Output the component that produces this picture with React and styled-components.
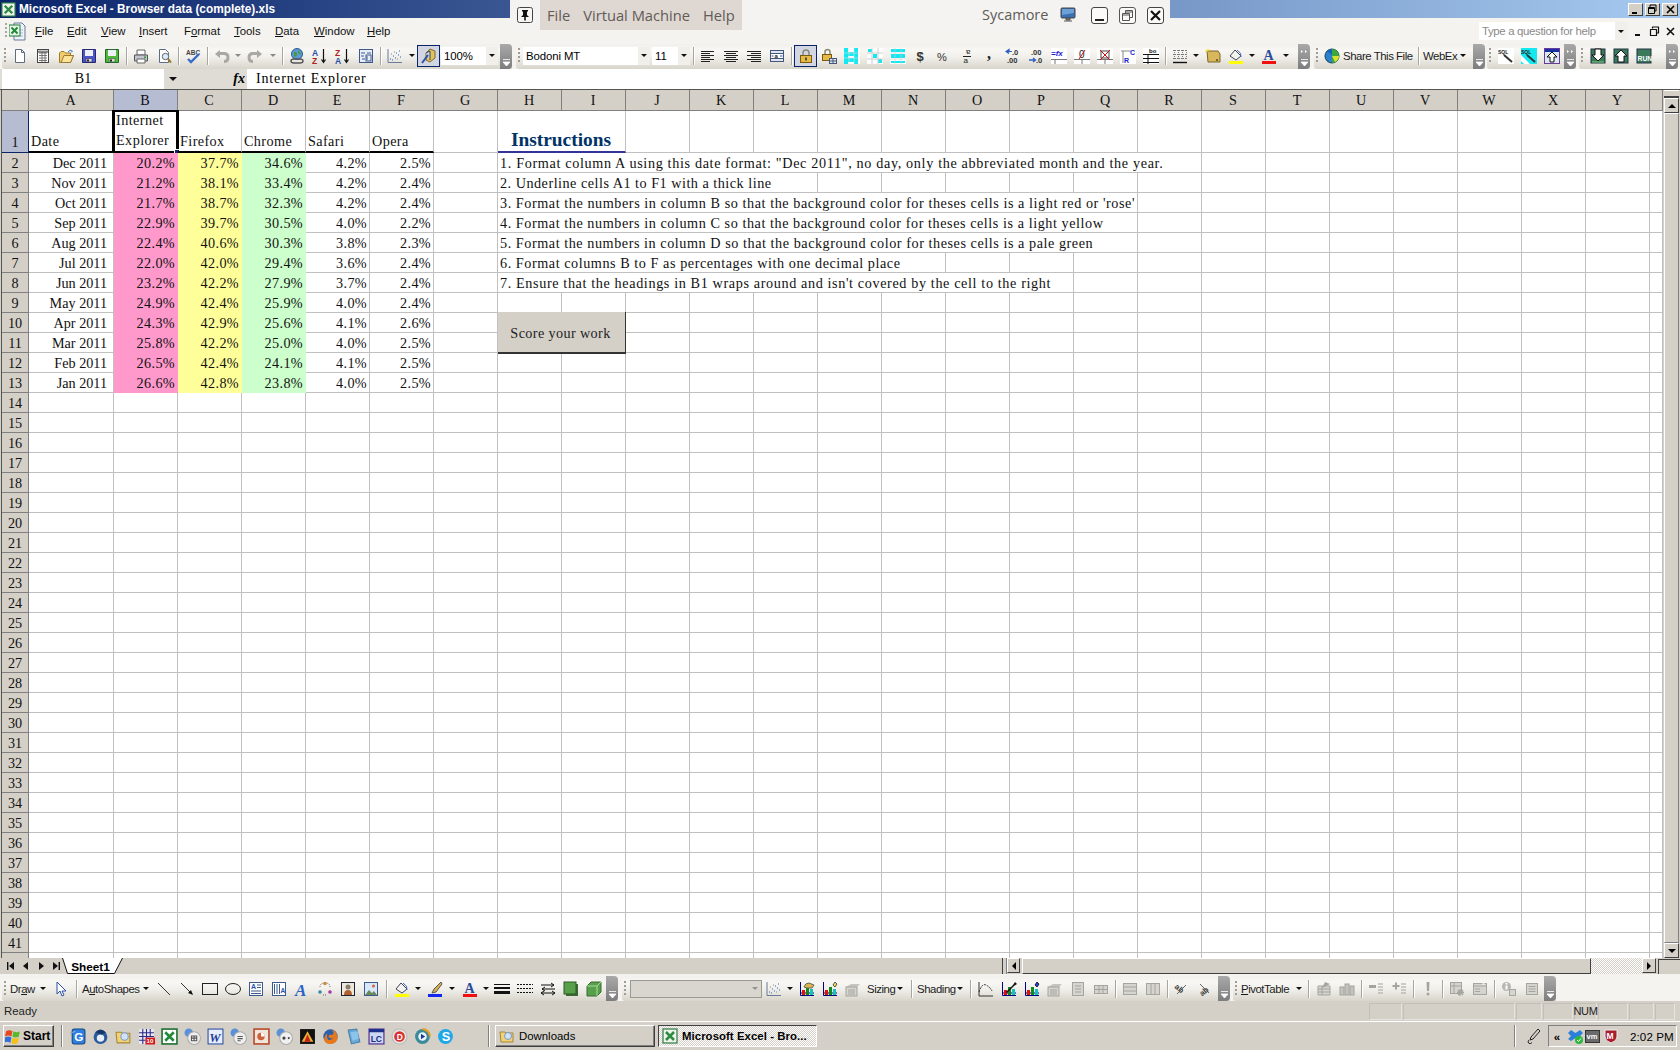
import React from 'react';
import styled, { createGlobalStyle, css } from 'styled-components';

const UI = '"Liberation Sans", Arial, sans-serif';
const SERIF = '"Liberation Serif", "Times New Roman", serif';

const Global = createGlobalStyle`
  html, body { margin: 0; padding: 0; overflow: hidden; background: #d4d0c8; }
  * { box-sizing: border-box; }
`;

const Page = styled.div`
  width: 1680px; height: 1050px; position: relative; overflow: hidden;
  display: flex; flex-direction: column; background: #d4d0c8;
  font-family: ${UI}; font-size: 11px; color: #000;
`;

/* ---------- title ---------- */
const TitleBar = styled.div`
  height: 18px; flex: none; display: flex; align-items: center; padding: 0 2px 0 1px;
  background: linear-gradient(90deg, #0a246a 0%, #a6caf0 100%);
`;
const TitleText = styled.span`
  margin-left: 3px; color: #fff; font-weight: 700; font-size: 11.85px; white-space: nowrap; flex: 1;
`;
const WinButtons = styled.div`display: flex; gap: 2px;`;
const WinBtn = styled.div`
  width: ${p => p.$w || 15}px; height: 13px; background: #d4d0c8; display: flex; align-items: center; justify-content: center;
  border: 1px solid; border-color: #fff #404040 #404040 #fff;
`;

/* ---------- vm overlay ---------- */
const VmBar = styled.div`
  position: absolute; left: 510px; top: 0; width: 660px; height: 30px; background: #f4f3f1;
  display: flex; align-items: flex-start; font-family: "Open Sans", "Noto Sans", sans-serif; color: #5f5b57;
`;
const VmPinSlot = styled.div`width: 30px; height: 30px; display: flex; align-items: center; justify-content: center;`;
const VmMenu = styled.div`
  width: 202px; height: 30px; background: #dfd8d2; display: flex; align-items: center; font-size: 14.7px; padding-left: 7px; gap: 13px;
`;
const VmName = styled.div`margin-left: 240px; height: 30px; line-height: 30px; font-size: 14.5px; width: 70px; white-space: nowrap;`;
const VmIcons = styled.div`display: flex; align-items: center; height: 30px;`;
const VmIconSlot = styled.div`width: ${p => p.$w}px; display: flex; justify-content: center; align-items: center;`;

/* ---------- menu ---------- */
const MenuBar = styled.div`
  height: 26px; flex: none; background: #f4f3f0; display: flex; align-items: center; padding-left: 5px; position: relative;
`;
const MenuGrip = styled.div`
  width: 3px; height: 16px; margin-right: 1px;
  background: linear-gradient(#a8a8a0 50%, transparent 50%) 0 0 / 2px 4px repeat-y;
`;
const MenuDoc = styled.div`width: 26px; height: 20px; display: flex; align-items: center; justify-content: flex-start;`;
const MenuItem = styled.span`
  width: ${p => p.$w}px; font-size: 11.4px; white-space: nowrap; color: #111;
`;
const Key = styled.u`text-decoration: underline;`;
const HelpBox = styled.div`
  position: absolute; left: 1479px; top: 4px; width: 148px; height: 18px; background: #fff; display: flex; align-items: center;
  padding-left: 3px; font-size: 11.4px; letter-spacing: -.33px; color: #8a8a8a; white-space: nowrap;
`;
const HelpArrow = styled.div`
  position: absolute; right: 0; top: 0; width: 12px; height: 18px; background: #f1efea; display: flex; align-items: center; justify-content: center;
`;
const DocButtons = styled.div`position: absolute; left: 1630px; top: 5px; width: 50px; height: 16px; display: flex; align-items: center;`;
const DocBtn = styled.div`width: 16px; display: flex; justify-content: center;`;

/* ---------- toolbars ---------- */
const ToolRow = styled.div`
  height: ${p => p.$h}px; flex: none; display: flex; align-items: stretch; padding-left: 2px;
  background: ${p => p.$bg || '#f4f3f0'};
  ${p => p.$top && css`padding-top: 1px;`}
`;
const Band = styled.div`
  width: ${p => p.$w}px; margin-left: ${p => p.$ml || 0}px; flex: none; display: flex; align-items: center;
  padding-bottom: ${p => p.$pb || 0}px;
  border-radius: 3px 0 0 3px;
  background: linear-gradient(#f1f0ec 0%, #f8f7f4 25%, #efeee9 55%, #d8d5cb 100%);
`;
const Grip = styled.div`
  width: ${p => p.$w || 6}px; flex: none; height: 100%; display: flex; align-items: center; padding-left: 2px;
  &::before {
    content: ''; width: 2px; height: 15px;
    background: linear-gradient(#9d9c96 50%, transparent 50%) 0 0 / 2px 4px repeat-y;
  }
`;
const Tool = styled.div`
  width: 23px; height: 22px; flex: none; display: flex; align-items: center; justify-content: center;
  ${p => p.$on && css`background: #d2d5e2; outline: 1px solid #0a246a; outline-offset: -1px;`}
`;
const Sep = styled.div`
  width: ${p => p.$w || 6}px; flex: none; height: 18px; display: flex; justify-content: center;
  &::before { content: ''; width: 1px; height: 100%; background: #a8a69e; box-shadow: 1px 0 0 #fff; }
`;
const Drop = styled.div`
  width: ${p => p.$w || 10}px; flex: none; display: flex; justify-content: center; align-items: center;
  &::before {
    content: ''; border-left: 3px solid transparent; border-right: 3px solid transparent;
    border-top: 3px solid ${p => p.$c || '#111'};
  }
`;
const TLabel = styled.div`
  width: ${p => p.$w}px; flex: none; font-size: 11.4px; letter-spacing: -.45px; white-space: nowrap; padding-left: ${p => p.$pl || 0}px; color: #1c1c1c;
`;
const Combo = styled.div`
  width: ${p => p.$w}px; margin-left: ${p => p.$ml || 0}px; height: 18px; flex: none; background: ${p => p.$off ? '#d8d6ce' : '#fff'};
  display: flex; align-items: center; padding-left: 3px; font-size: 11.4px; letter-spacing: -.1px; position: relative; white-space: nowrap;
  ${p => p.$off && css`border: 1px solid #9a9a94;`}
`;
const ComboBtn = styled.div`
  position: absolute; right: 0; top: 0; bottom: 0; width: 12px; display: flex; align-items: center; justify-content: center;
  background: ${p => p.$off ? 'transparent' : '#f0efea'};
  &::before {
    content: ''; border-left: 3px solid transparent; border-right: 3px solid transparent;
    border-top: 3px solid ${p => p.$off ? '#909090' : '#111'};
  }
`;
const Handle = styled.div`
  width: ${p => p.$w || 12}px; margin-left: auto; margin-bottom: ${p => -(p.$mb || 0)}px; flex: none; align-self: stretch; border-radius: 0 4px 4px 0;
  background: linear-gradient(#a9a9a9, #7d7d7d); display: flex; flex-direction: column; align-items: center; justify-content: space-between; padding: 5px 0 3px;
`;

/* ---------- formula ---------- */
const FormulaBar = styled.div`
  height: 20px; flex: none; display: flex; background: #dedcd5; padding-left: 2px; align-items: stretch;
  font-family: ${SERIF}; font-size: 14px;
`;
const NameBox = styled.div`width: 162px; background: #fff; text-align: center; line-height: 19px;`;
const NameArrow = styled.div`
  width: 18px; display: flex; align-items: center; justify-content: center;
  &::before { content: ''; border-left: 4px solid transparent; border-right: 4px solid transparent; border-top: 4px solid #111; }
`;
const FxBox = styled.div`width: 65px; display: flex; align-items: center; justify-content: flex-end; padding-right: 2px; font-style: italic; font-weight: 700; font-size: 14px;`;
const FormulaInput = styled.div`flex: 1; background: #fff; padding-left: 9px; line-height: 19px; letter-spacing: .85px; margin-left: 0;`;

/* ---------- sheet ---------- */
const Sheet = styled.div`
  height: 869px; flex: none; display: flex; border-top: 1px solid #55554f; overflow: hidden;
`;
const GridArea = styled.div`
  flex: 1; position: relative; overflow: hidden; margin-left: 1px; border-left: 1px solid #55554f; background: #fff;
  font-family: ${SERIF}; font-size: 14.2px; color: #111;
`;
const Row = styled.div`display: flex; height: ${p => p.$h}px;`;
const RowHead = styled.div`
  width: 27px; flex: none; text-align: center; background: ${p => p.$on ? '#b6bdd2' : '#d4d0c8'};
  border-right: 1px solid ${p => p.$on ? '#0a246a' : '#808080'};
  border-bottom: 1px solid ${p => p.$on ? '#0a246a' : '#808080'};
  display: flex; align-items: flex-end; justify-content: center; line-height: ${p => p.$on ? 19 : 17}px;
`;
const ColHead = styled.div`
  width: ${p => p.$w}px; flex: ${p => p.$w ? 'none' : '1'}; background: ${p => p.$on ? '#b6bdd2' : '#d4d0c8'};
  border-right: 1px solid #808080; border-bottom: 1px solid #808080; text-align: center; line-height: 20px; padding-right: 1px;
`;
const Cell = styled.div`
  width: ${p => p.$w}px; flex: ${p => p.$w ? 'none' : '1'}; position: relative; white-space: nowrap;
  display: flex; align-items: flex-end; justify-content: ${p => p.$right ? 'flex-end' : p.$center ? 'center' : 'flex-start'};
  padding: 0 ${p => p.$pr ?? 3}px 0 2px; line-height: ${p => p.$thick ? 19 : 17}px;
  background: ${p => p.$fill || 'transparent'};
  border-right: 1px solid ${p => p.$fill || '#c0c0c0'};
  border-bottom: ${p => p.$thick ? `2px solid ${p.$thick}` : `1px solid ${p.$fill || '#c0c0c0'}`};
`;
const WrapText = styled.div`white-space: normal; line-height: 20px; letter-spacing: .45px; position: relative; top: -1px;`;
const Heading = styled.span`
  font-weight: 700; font-size: 19.4px; color: #003366; line-height: 22px;
`;
const Note = styled.span`letter-spacing: ${p => p.$ls}px;`;
const Selection = styled.div`
  position: absolute; left: -2px; top: -1px; right: -2px; bottom: -2px;
  border: 2px solid #000; border-left-width: 3px; border-right-width: 3px; pointer-events: none;
`;
const FillHandle = styled.div`
  position: absolute; right: -4px; bottom: -3px; width: 6px; height: 5px; background: #0a246a; border: 1px solid #fff;
`;
const ScoreButton = styled.div`
  position: absolute; left: 496px; top: 222px; width: 128px; height: 42px; background: #d4d0c8; padding: 2px 2px 0 0;
  border-bottom: 2px solid #333; border-right: 1px solid #333;
  display: flex; align-items: center; justify-content: center; letter-spacing: .38px; color: #222;
`;
const VScroll = styled.div`width: 17px; flex: none; background: #d4d0c8; display: flex; flex-direction: column; padding: 0 1px;`;
const Split = styled.div`height: 8px; border-top: 1px solid #fff; border-bottom: 2px solid #404040; flex: none;`;
const SBtn = styled.div`
  width: ${p => p.$w || 15}px; height: ${p => p.$h || 15}px; flex: none; background: #d4d0c8; display: flex; align-items: center; justify-content: center;
  border: 1px solid; border-color: #fff #404040 #404040 #fff;
`;
const Thumb = styled.div`flex: 1; border: 1px solid; border-color: #fff #808080 #808080 #fff;`;

/* ---------- tabs ---------- */
const TabRow = styled.div`
  height: 17px; flex: none; display: flex; background: #d4d0c8; align-items: stretch; border-bottom: 1px solid #f4f3f0; padding-left: 3px;
`;
const NavBtn = styled.div`width: 15px; display: flex; align-items: center; justify-content: center;`;
const Tab = styled.div`
  width: 62px; margin-left: -1px; position: relative; display: flex; align-items: center; justify-content: center;
  font-weight: 700; font-size: 11.8px; padding: 1px 5px 0 0;
`;
const TabShape = styled.svg`position: absolute; left: 0; top: 0;`;
const TabText = styled.span`position: relative;`;
const TabFill = styled.div`flex: 1;`;
const HSplit = styled.div`width: 5px; flex: none; border-left: 1px solid #404040; border-right: 1px solid #808080;`;
const HThumb = styled.div`width: 569px; flex: none; margin-left: 2px; border: 1px solid; border-color: #fff #404040 #404040 #fff;`;
const Checker = styled.div`
  width: 51px; flex: none;
  background: repeating-conic-gradient(#fff 0 25%, #d4d0c8 0 50%) 0 0 / 2px 2px;
`;
const Corner = styled.div`width: 22px; flex: none; margin-left: 2px; border-left: 1px solid #404040; border-top: 1px solid #404040; margin-top: 1px;`;

/* ---------- status ---------- */
const Status = styled.div`
  height: 21px; flex: none; display: flex; align-items: center; background: #d4d0c8; padding-left: 4px; font-size: 11.4px; border-bottom: 1px solid #fff; color: #222;
`;
const StatusText = styled.span`width: 1365px;`;
const Panel = styled.div`
  width: ${p => p.$w}px; height: 17px; flex: none; margin-right: 1px; border: 1px solid; border-color: #c4c0b8 #e6e4de #e6e4de #c4c0b8;
  display: flex; align-items: center; justify-content: center; font-size: 11px; letter-spacing: -.4px;
`;

/* ---------- taskbar ---------- */
const Taskbar = styled.div`
  height: 28px; flex: none; display: flex; align-items: center; background: #d4d0c8; padding-left: 3px;
`;
const StartBtn = styled.div`
  width: 51px; height: 22px; flex: none; display: flex; align-items: center; padding-left: 1px; gap: 1px; font-weight: 700; font-size: 12px;
  border: 1px solid; border-color: #fff #404040 #404040 #fff; box-shadow: inset -1px -1px 0 #808080;
`;
const TaskSep = styled.div`
  width: 2px; height: 22px; flex: none; margin-left: ${p => p.$ml}px; margin-right: ${p => p.$mr}px;
  border-left: 1px solid #808080; border-right: 1px solid #fff;
`;
const Quick = styled.div`width: 23px; flex: none; display: flex; justify-content: center; align-items: center;`;
const TaskBtn = styled.div`
  width: ${p => p.$w}px; height: 22px; flex: none; margin-left: ${p => p.$ml || 0}px; display: flex; align-items: center; gap: 4px; padding-left: 3px; white-space: nowrap;
  font-size: 11.4px;
  border: 1px solid;
  ${p => p.$on ? css`
    border-color: #404040 #fff #fff #404040; font-weight: 700; letter-spacing: .05px;
    background: repeating-conic-gradient(#fff 0 25%, #d4d0c8 0 50%) 0 0 / 2px 2px;
  ` : css`
    border-color: #fff #404040 #404040 #fff; box-shadow: inset -1px -1px 0 #808080;
  `}
`;
const TaskFill = styled.div`flex: 1;`;
const Tray = styled.div`
  width: 129px; height: 22px; flex: none; margin-left: 3px; margin-right: 3px; display: flex; align-items: center;
  border: 1px solid; border-color: #808080 #fff #fff #808080; font-size: 11.6px;
`;
const TrayIcon = styled.div`width: ${p => p.$w}px; flex: none; display: flex; justify-content: center; align-items: center; font-weight: 700;`;
const Clock = styled.span`margin-left: 8px; white-space: nowrap; letter-spacing: .1px;`;

/* ---------- icons ---------- */
const Doc = ({ fill = '#fff', st = '#5d6b84' }) => <path d="M3.500 1.500h6l3 3v10h-9z" fill={fill} stroke={st} />;
const G = '#a9a8a2';
const Floppy = (a, b) => <>
  <path d="M1.500 1.500h13v13h-13z" fill={a} stroke={b} />
  <path d="M4 2h8v6H4z" fill="#eef0f8" />
  <path d="M5 10.500h6V14H5z" fill="#d8d8d8" stroke={b} strokeWidth=".6" />
  <rect x="6" y="11.500" width="2" height="2" fill="#222" />
</>;
const Bars = (rows) => rows.map((r, i) => <path key={i} d={`M${r[0]} ${r[1]}h${r[2]}`} stroke={r[3] || '#222'} />);
const BarChart = (x) => <>
  <path d="M1.500 1v13.500H15" fill="none" stroke="#000080" />
  <path d="M1 12h14" stroke="#000080" />
  <rect x="3" y="9" width="3" height="5" fill="#e01010" /><rect x="7" y="6" width="3" height="8" fill="#108a20" /><rect x="11" y="8" width="3" height="6" fill="#18c0c0" />
  {x}
</>;
const Gray = <>
  <path d="M1 6l5-3h9l-3 3H1z" fill="#c6c5bf" /><rect x="1" y="6" width="11" height="9" fill="#d5d4ce" stroke="#a5a49e" />
  <path d="M3 9h7M3 11h7M3 13h7" stroke="#a5a49e" />
</>;
const I = {
  new: <><Doc /><path d="M9.500 1.500v3h3" fill="none" stroke="#5d6b84" /></>,
  tmpl: <><rect x="2.500" y="1.500" width="11" height="13" fill="#fff" stroke="#444" /><path d="M4 5h8M4 7.500h8M4 10h8M4 12.500h8M7 4v10M10 4v10" stroke="#777" /><path d="M2.500 1.500h11V4h-11z" fill="#ccc" stroke="#444" /></>,
  open: <><path d="M1.500 5v9.500h11l3-7h-3V5h-5L6 3.500H3z" fill="#f2cb6c" stroke="#9a7a2d" /><path d="M3 14.500l3-7h9.500l-3 7z" fill="#fbe49a" stroke="#9a7a2d" /><path d="M10 4q2-3 4.500-1L13 4.500" fill="none" stroke="#3a7bd0" /></>,
  save: Floppy('#4b55c8', '#23286f'),
  save2: Floppy('#53b83a', '#23672a'),
  print: <><path d="M4 2h8v5H4z" fill="#fff" stroke="#666" /><path d="M1.500 7h13v6h-13z" fill="#c2c6d0" stroke="#555" /><path d="M4 11h8v4H4z" fill="#fff" stroke="#666" /><rect x="11" y="8.500" width="2" height="1.500" fill="#2e9a35" /></>,
  prev: <><Doc /><circle cx="9.500" cy="8.500" r="3.200" fill="#d8ecff" stroke="#666" /><path d="M12 11l3 3.500" stroke="#9a7a2d" strokeWidth="2" /></>,
  spell: <><text x="1" y="6.500" fontSize="6.500" fontFamily="Liberation Sans" fontWeight="700" fill="#444">ABC</text><path d="M3 11l3 3 8-8" fill="none" stroke="#3b6bc8" strokeWidth="2.400" /></>,
  undo: <><path d="M5 5.500h5q4 0 4 4t-4 4" fill="none" stroke={G} strokeWidth="3" /><path d="M1 6l5-4v8z" fill={G} /></>,
  redo: <><path d="M11 5.500H6q-4 0-4 4t4 4" fill="none" stroke={G} strokeWidth="3" /><path d="M15 6l-5-4v8z" fill={G} /></>,
  link: <><circle cx="8" cy="6" r="5.500" fill="#5a9bd8" stroke="#2a5a90" /><path d="M5 3.500q3 0 3 3t-3 2zM9 2q3 2 3 5L9 5z" fill="#4a9a3c" /><path d="M2 13q0-2 3-2h6q3 0 3 2t-3 2H5q-3 0-3-2z" fill="none" stroke="#555" strokeWidth="1.400" /></>,
  az: <><text x="0" y="7.500" fontSize="8.500" fontFamily="Liberation Sans" fontWeight="700" fill="#2a50a8">A</text><text x="0" y="15.500" fontSize="8.500" fontFamily="Liberation Sans" fontWeight="700" fill="#b02020">Z</text><path d="M11.500 1v13M9.500 11.500l2 3 2-3" fill="none" stroke="#111" strokeWidth="1.200" /></>,
  za: <><text x="0" y="7.500" fontSize="8.500" fontFamily="Liberation Sans" fontWeight="700" fill="#b02020">Z</text><text x="0" y="15.500" fontSize="8.500" fontFamily="Liberation Sans" fontWeight="700" fill="#2a50a8">A</text><path d="M11.500 1v13M9.500 11.500l2 3 2-3" fill="none" stroke="#111" strokeWidth="1.200" /></>,
  form: <><rect x="1.500" y="1.500" width="13" height="13" fill="#e8eef8" stroke="#3c5a8c" /><path d="M3 5h4M9 5h4M3 8h3M9 8v4M7 11h-3" stroke="#3c5a8c" /><rect x="8" y="7" width="5" height="6" fill="none" stroke="#3c5a8c" /></>,
  scatter: <><path d="M1 1v13.500h14" fill="none" stroke="#6a7a9a" /><path d="M3 11h1M6 8h1M9 5h1M12 3h1M5 12h1M8 10h1M11 7h1M13 9h1" stroke="#3060c0" /><path d="M4 6h1M7 4h1M10 11h1" stroke="#888" /></>,
  wand: <><path d="M9 1l5 2v7l-5 4-4-2V5z" fill="#e3c25e" stroke="#7a6a30" /><path d="M5 5l4-2v9" fill="#c8d8f0" stroke="#345" /><path d="M1 15l6-8" stroke="#2f53a8" strokeWidth="2" /></>,
  alL: Bars([[1, 3.500, 13], [1, 5.500, 9], [1, 7.500, 13], [1, 9.500, 9], [1, 11.500, 13], [1, 13.500, 9]]),
  alC: Bars([[1, 3.500, 14], [3, 5.500, 10], [1, 7.500, 14], [3, 9.500, 10], [1, 11.500, 14], [3, 13.500, 10]]),
  alR: Bars([[1, 3.500, 14], [5, 5.500, 10], [1, 7.500, 14], [5, 9.500, 10], [1, 11.500, 14], [5, 13.500, 10]]),
  merge: <><rect x="1.500" y="2.500" width="13" height="11" fill="#dfe6f2" stroke="#44567a" /><path d="M1.500 5.500h13M1.500 10.500h13" stroke="#44567a" /><rect x="2" y="6" width="12" height="4" fill="#fff" /><text x="5.500" y="10" fontSize="6" fontFamily="Liberation Sans" fontWeight="700" fill="#222">a</text><path d="M2.500 8h2M11 8h2.500" stroke="#2a50a8" /></>,
  lock: <><path d="M5 8V5q0-3 3-3t3 3v3" fill="none" stroke="#8a8a7a" strokeWidth="1.500" /><rect x="2.500" y="7.500" width="11" height="7" fill="#e9b945" stroke="#7a5a10" /><rect x="7" y="9.500" width="2" height="3" fill="#553" /></>,
  lock2: <><path d="M4 7V4q0-2.500 2.500-2.500T9 4v3" fill="none" stroke="#8a8a7a" strokeWidth="1.500" /><rect x="1.500" y="6.500" width="9" height="6" fill="#e9b945" stroke="#7a5a10" /><rect x="8.500" y="10.500" width="7" height="5" fill="#dfe6f2" stroke="#44567a" /><path d="M8.500 13h7M12 10.500v5" stroke="#44567a" /></>,
  cy1: <><rect width="16" height="16" fill="#fff" /><path d="M0 0h4v16H0zM10 0h4v16h-4zM4 4h6v4H4zM4 10h6v4H4z" fill="#14e8f0" /><path d="M0 5h16M0 10h16M5 0v16M10 0v16" stroke="#ddd" strokeWidth=".6" /></>,
  cy2: <><rect width="16" height="16" fill="#fff" /><path d="M1 1h4v3H1zM6 6h4v4H6zM11 11h4v4h-4z" fill="#14e8f0" /><path d="M0 5h16M0 11h16M5 0v16M11 0v16" stroke="#ccc" /></>,
  cy3: <><rect width="16" height="16" fill="#fff" /><path d="M1 1h14v3H1zM1 6h14v4H1zM1 13h14v2H1z" fill="#14e8f0" /><path d="M0 5h16M0 11h16M5 0v16M11 0v16" stroke="#ccc" strokeWidth=".6" /></>,
  dollar: <text x="3.500" y="13" fontSize="13" fontFamily="Liberation Sans" fontWeight="700" fill="#333">$</text>,
  pct: <text x="1" y="12.500" fontSize="11" fontFamily="Liberation Sans" fill="#333">%</text>,
  aa: <><text x="4.500" y="7" fontSize="8" fontFamily="Liberation Sans" fill="#222" transform="rotate(180 8 4.500)">a</text><path d="M4 8.500h8" stroke="#222" /><text x="4.500" y="15" fontSize="8" fontFamily="Liberation Sans" fill="#222">a</text></>,
  comma: <text x="5" y="11" fontSize="16" fontFamily="Liberation Serif" fontWeight="700" fill="#222">,</text>,
  inc: <><path d="M1 3.500h3v-2l-3 2 3 2" fill="none" stroke="#2f5fc4" strokeWidth="1.300" /><path d="M3 3.500h4" stroke="#2f5fc4" /><text x="7" y="7" fontSize="7.500" fontFamily="Liberation Sans" fontWeight="700" fill="#333">.0</text><text x="2" y="15" fontSize="7.500" fontFamily="Liberation Sans" fontWeight="700" fill="#333">.00</text></>,
  dec: <><text x="3" y="7" fontSize="7.500" fontFamily="Liberation Sans" fontWeight="700" fill="#333">.00</text><text x="8" y="15" fontSize="7.500" fontFamily="Liberation Sans" fontWeight="700" fill="#333">.0</text><path d="M1 12h6M5 10l2.500 2L5 14" fill="none" stroke="#2f5fc4" strokeWidth="1.300" /></>,
  fxb: <><rect width="16" height="16" fill="#fff" /><path d="M0 11.500h16M4 12v4" stroke="#777" /><text x="0" y="8" fontSize="8" fontFamily="Liberation Sans" fontWeight="700" fontStyle="italic" fill="#2020d0">=fx</text></>,
  zero: <><rect width="16" height="16" fill="#fff" /><path d="M0 11.500h16M8 12v4" stroke="#777" /><text x="5" y="10" fontSize="10" fontFamily="Liberation Sans" fill="#222">0</text><path d="M5 11l6-9" stroke="#d01010" /></>,
  xcell: <><rect width="16" height="16" fill="#fff" /><path d="M0 11.500h16M8 12v4" stroke="#777" /><rect x="4" y="3" width="8" height="7" fill="none" stroke="#444" /><path d="M3 2l10 10M13 2L3 12" stroke="#d01010" /></>,
  rc: <><rect x="0" y="0" width="16" height="16" fill="#fff" /><path d="M1 3h10M3 3v12" stroke="#888" /><text x="10" y="7" fontSize="7" fontFamily="Liberation Sans" fontWeight="700" fill="#2020d0">C</text><text x="4" y="15" fontSize="7" fontFamily="Liberation Sans" fontWeight="700" fill="#2020d0">R</text></>,
  bo: <><rect width="16" height="16" fill="#fff" /><path d="M0 6.500h16M0 10.500h16M0 14.500h16M5 7v9" stroke="#111" /><text x="6" y="5" fontSize="6" fontFamily="Liberation Sans" fontWeight="700" fill="#111">bo</text></>,
  borders: <><path d="M1 2.500h14M1 6.500h14M1 10.500h14M2.500 2v10M6.500 2v10M10.500 2v10M14.500 2v10" stroke="#777" strokeDasharray="1 1" /><path d="M1 14.500h14" stroke="#111" strokeWidth="1.400" /></>,
  fold: <><path d="M2 3h11l2 3v8H3z" fill="#d9b85c" stroke="#7a6428" /><path d="M2 1l1 2M0 3h3M4 1l-1 2" stroke="#f5e020" /><rect x="11" y="11" width="2" height="2" fill="#7a6428" /></>,
  bucket: <><path d="M2 8l5-6 6 6-5 4z" fill="#f2f2ee" stroke="#445" /><path d="M9 2q5 3 4 7" fill="none" stroke="#3a6ac0" /><rect x="1" y="13" width="14" height="3" fill="#ffff00" /></>,
  fontA: <><text x="2.500" y="12" fontSize="14" fontFamily="Liberation Serif" fontWeight="700" fill="#2a4a9a">A</text><rect x="1" y="13" width="14" height="3" fill="#f01010" /></>,
  globe: <><circle cx="8" cy="8" r="7" fill="#2e7fd0" stroke="#145" /><path d="M8 1a7 7 0 0 1 0 14z" fill="#3aa83a" /><path d="M8 1a7 7 0 0 0-5 2l5 4z" fill="#1a62b8" /><path d="M8 8l7 0a7 7 0 0 1-4 6z" fill="#d8e030" /></>,
  sql1: <><rect width="16" height="16" fill="#fff" /><text x="0" y="6" fontSize="5" fontFamily="Liberation Sans" fontWeight="700" fill="#222">SQL</text><path d="M6 7l8 7" stroke="#333" strokeWidth="2" /></>,
  sql2: <><rect width="16" height="16" fill="#14e8f0" /><path d="M0 13V7l9 9H3z" fill="#fff" /><text x="0" y="6" fontSize="5" fontFamily="Liberation Sans" fontWeight="700" fill="#222">SQL</text><path d="M6 7l8 7" stroke="#333" strokeWidth="2" /></>,
  up1: <><rect x=".500" y=".500" width="15" height="15" fill="#d8e8f0" stroke="#6a3aa0" /><rect x="1" y="1" width="14" height="3" fill="#1830a0" /><path d="M8 4l-5 5h3v5h4V9h3z" fill="#fff" stroke="#111" /></>,
  dl: <><rect x="1" y="1" width="14" height="14" fill="#3a7a5a" stroke="#234" /><path d="M5 1h6v6h3l-6 6-6-6h3z" fill="#fff" stroke="#111" /><path d="M2 14h12" stroke="#7ad07a" /></>,
  ul: <><rect x="1" y="1" width="14" height="14" fill="#3a7a5a" stroke="#234" /><path d="M8 2l6 6h-3v6H5V8H2z" fill="#fff" stroke="#111" /></>,
  run: <><rect x="1" y="1" width="14" height="14" fill="#3a7a5a" stroke="#234" /><text x="1.500" y="13" fontSize="6.800" fontFamily="Liberation Sans" fontWeight="700" fill="#fff">RUN</text></>,
  cursor: <path d="M4 1v12l3-3 2 5 2-1-2-4h4z" fill="#fff" stroke="#2a50a8" />,
  line: <path d="M2 2l12 12" stroke="#333" />,
  arrow: <><path d="M2 2l10 10" stroke="#333" /><path d="M14 14l-5-2 3-3z" fill="#111" /></>,
  rect: <rect x=".500" y="2.500" width="15" height="11" fill="none" stroke="#222" />,
  ell: <ellipse cx="8" cy="8" rx="7.500" ry="5.500" fill="none" stroke="#222" />,
  tbox: <><rect x="1.500" y="1.500" width="13" height="13" fill="#fff" stroke="#3c5a8c" /><text x="3" y="8" fontSize="7" fontFamily="Liberation Sans" fontWeight="700" fill="#2a50a8">A</text><path d="M9 4h4M9 6.500h4M3 10h10M3 12.500h10" stroke="#3c5a8c" /></>,
  vbox: <><rect x="1.500" y="1.500" width="13" height="13" fill="#fff" stroke="#3c5a8c" /><path d="M3.500 3v10M6 3v10M8.500 3v10" stroke="#3c5a8c" /><text x="9.500" y="12" fontSize="6.500" fontFamily="Liberation Sans" fontWeight="700" fill="#2a50a8">A</text></>,
  wordart: <text x="1" y="14.500" fontSize="17" fontFamily="Liberation Serif" fontWeight="700" fontStyle="italic" fill="#2a62c8">A</text>,
  diag: <><circle cx="8" cy="2.500" r="1.800" fill="#c83" /><circle cx="3" cy="11" r="1.800" fill="#38a" /><circle cx="13" cy="11" r="1.800" fill="#a3a" /><path d="M3 6q0-3 3-4M13 6q0-3-3-4M6 14h4" fill="none" stroke="#666" strokeDasharray="1 1" /></>,
  clip: <><rect x="1.500" y="1.500" width="13" height="13" fill="#ece8de" stroke="#223" /><circle cx="8" cy="6" r="2.500" fill="#8a7a6a" /><path d="M4 14q0-5 4-5t4 5z" fill="#b06030" /></>,
  pic: <><rect x="1.500" y="1.500" width="13" height="13" fill="#d8e8fa" stroke="#3c5a8c" /><path d="M2 14l4-5 3 3 2-2 3 4z" fill="#6a8a5a" /><circle cx="10.500" cy="5" r="1.500" fill="#e06030" /></>,
  pen: <><path d="M14 1L7 8l-2 4 4-1 6-8z" fill="#d8b050" stroke="#555" /><rect x="1" y="13" width="14" height="3" fill="#1028f0" /></>,
  lineS: <><rect x="0" y="3" width="16" height="1" fill="#111" /><rect x="0" y="6" width="16" height="2" fill="#111" /><rect x="0" y="10" width="16" height="3" fill="#111" /></>,
  dashS: <path d="M0 3.500h16M0 7.500h16M0 11.500h16" stroke="#111" strokeDasharray="2 1" />,
  arrS: <path d="M1 4h13M11 2l3 2-3 2M15 8H2M5 6L2 8l3 2M1 12h14M4 10l-3 2 3 2M12 10l3 2-3 2" fill="none" stroke="#111" />,
  shadow: <><rect x="3" y="3" width="12" height="12" fill="#3d6a35" /><rect x="1" y="1" width="12" height="12" fill="#58a04a" stroke="#2a5a26" /></>,
  cube: <><path d="M1 5l4-4h10v10l-4 4H1z" fill="#58a04a" stroke="#3a6a32" /><path d="M1 5h10v10M11 5l4-4" fill="none" stroke="#a6dc9c" /></>,
  chartHand: BarChart(<path d="M5 6q1-4 5-4l5 2-2 3H8z" fill="#dcb450" stroke="#665" />),
  chartPen: BarChart(<path d="M11 4l2-3 2 2-2 3z" fill="#f0e040" stroke="#555" />),
  dropper: BarChart(<path d="M5 11l7-7 2-3 2 2-3 2-7 7z" fill="#111" />),
  chartBlue: BarChart(<path d="M11 4l2-3 2 2-2 3z" fill="#2040e0" stroke="#223" />),
  grayCard: Gray,
  curve: <><path d="M1 1v14h14" fill="none" stroke="#333" /><path d="M1 11q3-9 7-7t6 6" fill="none" stroke="#333" strokeDasharray="2 1" /></>,
  grayList: <><rect x="2.500" y="1.500" width="11" height="13" fill="#d5d4ce" stroke="#a5a49e" /><path d="M5 5h6M5 8h6M5 11h6" stroke="#a5a49e" /></>,
  grayGrid: <><rect x="1.500" y="4.500" width="13" height="8" fill="#d5d4ce" stroke="#a5a49e" /><path d="M1.500 8.500h13M6 4.500v8M10 4.500v8" stroke="#a5a49e" /></>,
  gray3h: <><rect x="1.500" y="2.500" width="13" height="11" fill="#d5d4ce" stroke="#a5a49e" /><path d="M1.500 6h13M1.500 10h13" stroke="#a5a49e" /></>,
  gray3v: <><rect x="1.500" y="2.500" width="13" height="11" fill="#d5d4ce" stroke="#a5a49e" /><path d="M6 2.500v11M10 2.500v11" stroke="#a5a49e" /></>,
  link1: <><text x="1" y="12" fontSize="8" fontFamily="Liberation Sans" fontWeight="700" fill="#444" transform="rotate(40 8 8)">ab</text><path d="M3 13l9-9" stroke="#444" strokeWidth=".8" /></>,
  link2: <><text x="1" y="12" fontSize="8" fontFamily="Liberation Sans" fontWeight="700" fill="#444" transform="rotate(-40 8 8)">ab</text><path d="M3 3l9 9" stroke="#444" strokeWidth=".8" /></>,
  pvt1: <><path d="M2 5h12v9H2z" fill="#d5d4ce" stroke="#a5a49e" /><path d="M2 8h12M2 11h12M6 5v9" stroke="#a5a49e" /><path d="M9 1l5 2-8 4z" fill="#a5a49e" /></>,
  pvt2: <><rect x="1" y="6" width="4" height="8" fill="#c4c3bd" stroke="#a5a49e" /><rect x="6" y="3" width="4" height="11" fill="#c4c3bd" stroke="#a5a49e" /><rect x="11" y="5" width="4" height="9" fill="#c4c3bd" stroke="#a5a49e" /></>,
  minus: <><rect x="1" y="4" width="7" height="3" fill="#a5a49e" /><path d="M10 3h5M10 6h5M10 9h5M10 12h5" stroke="#a5a49e" /></>,
  plus: <><path d="M4 1.500h2v2.500h2.500v2H6v2.500H4V6H1.500V4H4z" fill="#a5a49e" /><path d="M10 3h5M10 6h5M10 9h5M10 12h5" stroke="#a5a49e" /></>,
  excl: <><path d="M6.500 1h3L9 10H7z" fill="#a5a49e" /><circle cx="8" cy="13" r="1.500" fill="#a5a49e" /></>,
  cfg: <><rect x="1.500" y="1.500" width="11" height="11" fill="#d5d4ce" stroke="#a5a49e" /><path d="M1.500 5h11M5 1.500v11" stroke="#a5a49e" /><path d="M11 8v7M8 11.500h7M9 9l5 5M14 9l-5 5" stroke="#a5a49e" strokeWidth="1.300" /></>,
  win: <><rect x="1.500" y="2.500" width="13" height="11" fill="#d5d4ce" stroke="#a5a49e" /><path d="M2 5h12M3 8h5M3 10.500h5" stroke="#a5a49e" /><path d="M10 3h3" stroke="#fff" /></>,
  info: <><circle cx="5.500" cy="5.500" r="4.500" fill="#b8b7b1" /><rect x="4.500" y="4.500" width="2" height="4" fill="#fff" /><rect x="4.500" y="2" width="2" height="1.500" fill="#fff" /><rect x="8.500" y="8.500" width="6" height="6" fill="#d5d4ce" stroke="#a5a49e" /></>,
  sheetG: <><rect x="2.500" y="2.500" width="11" height="11" fill="#d5d4ce" stroke="#a5a49e" /><path d="M4.500 5.500h7M4.500 8h7M4.500 10.500h7" stroke="#a5a49e" /></>,
};

const Icon = ({ n, s = 16 }) => (
  <svg width={s} height={s} viewBox="0 0 16 16">{I[n]}</svg>
);
const T = ({ n, on }) => <Tool $on={on}><Icon n={n} /></Tool>;
const Ts = ({ list }) => list.map((n, i) => <T key={i} n={n} />);

const More = ({ s = '#fff' }) => (
  <svg width="7" height="7" viewBox="0 0 7 7"><path d="M0 1l2 1.500L0 4zM4 1l2 1.500L4 4z" fill={s} /></svg>
);
const Down = () => (
  <svg width="7" height="7" viewBox="0 0 7 7"><path d="M0 .500h7M0 3h7L3.500 7z" stroke="#fff" fill="#fff" strokeWidth=".8" /></svg>
);

const TbHandle = ({ more, w, mb }) => (
  <Handle $w={w} $mb={mb}>{more ? <More /> : <span />}<Down /></Handle>
);

const Glyph = ({ d, w = 16, h = 16, vb = '0 0 16 16', fill = 'none', stroke = '#4a4a4a', sw = 1.4 }) => (
  <svg width={w} height={h} viewBox={vb}><path d={d} fill={fill} stroke={stroke} strokeWidth={sw} strokeLinejoin="round" /></svg>
);

const MiniTri = ({ dir }) => {
  const d = { u: 'M1 7l4-4 4 4z', d: 'M1 3l4 4 4-4z', l: 'M7 1L3 5l4 4z', r: 'M3 1l4 4-4 4z' }[dir];
  return <svg width="10" height="10" viewBox="0 0 10 10"><path d={d} fill="#000" /></svg>;
};
const Nav = ({ kind }) => {
  const d = {
    first: 'M2 2v8h1.400V2zM9 2L4 6l5 4z', prev: 'M8 2L3 6l5 4z', next: 'M4 2l5 4-5 4z', last: 'M3 2l5 4-5 4zM8.600 2v8H10V2z',
  }[kind];
  return <svg width="12" height="12" viewBox="0 0 12 12"><path d={d} fill="#111" /></svg>;
};

/* ---------- quick launch ---------- */
const Q = {
  ie: <><rect x="3" y="1" width="12" height="14" rx="2" fill="#2f7fe0" stroke="#14487f" /><text x="5" y="12" fontSize="11" fontWeight="700" fontFamily="Liberation Sans" fill="#fff">G</text><path d="M1 5l5-2" stroke="#8ac" /></>,
  tb: <><circle cx="8" cy="8.500" r="6.500" fill="#2a5a9a" /><circle cx="8" cy="9.500" r="3.500" fill="#e8eef8" /><path d="M3 4q5-5 10 0l-4 2z" fill="#16376a" /></>,
  fold: <><path d="M1 4h5l1 1h7v9H2z" fill="#f3d276" stroke="#a58836" /><circle cx="9" cy="8" r="3.500" fill="#cfe2f8" stroke="#7a9ac0" /></>,
  cal: <><rect x="1" y="1" width="14" height="14" fill="#e8e8f4" /><path d="M1 4.500h14M1 8h14M1 11.500h6M4.500 1v14M8 1v14M11.500 1v7" stroke="#2a2a88" /><rect x="7" y="9" width="9" height="6.500" fill="#d81818" /><text x="8" y="14.500" fontSize="5.800" fontFamily="Liberation Sans" fontWeight="700" fill="#fff">10</text></>,
  xl: <><rect x="1" y="1" width="14" height="14" fill="#fff" stroke="#1f6f32" strokeWidth="1.500" /><path d="M4 4l8 8M12 4l-8 8" stroke="#1f8a38" strokeWidth="2.500" /></>,
  bub1: <><circle cx="4.500" cy="4.500" r="4" fill="#5a90d8" /><circle cx="9.500" cy="9.500" r="6" fill="#f0f0f0" stroke="#aaa" /><path d="M7 7.500h5v4.500H7zM9.500 7.500v4.500M7 9.500h5" fill="none" stroke="#555" /></>,
  wd: <><rect x="1" y="1" width="14" height="14" fill="#e8eefa" stroke="#2a4ea0" /><text x="2" y="13" fontSize="12" fontWeight="700" fontStyle="italic" fontFamily="Liberation Serif" fill="#1c3f9a">W</text></>,
  bub2: <><circle cx="4.500" cy="4.500" r="4" fill="#5a90d8" /><circle cx="9.500" cy="9.500" r="6" fill="#f0f0f0" stroke="#aaa" /><path d="M7 8h5M7 10h5M7 12h3" stroke="#555" /></>,
  ppt: <><rect x="1" y="1" width="14" height="14" fill="#f0e6de" stroke="#b84a28" strokeWidth="1.500" /><circle cx="7.500" cy="8" r="3.500" fill="#d06038" /><path d="M7.500 8V4.500a3.500 3.500 0 0 1 3.500 3.500z" fill="#fff" /></>,
  bub3: <><circle cx="4.500" cy="4.500" r="4" fill="#5a90d8" /><circle cx="9.500" cy="9.500" r="6" fill="#f0f0f0" stroke="#aaa" /><circle cx="7.500" cy="9.500" r="1.500" fill="#444" /><circle cx="12" cy="9.500" r="1" fill="#444" /></>,
  tri: <><rect x="1" y="1" width="14" height="14" fill="#111" /><path d="M8 3l5.500 10h-11z" fill="#e8b030" /><path d="M8 6l3 7H5z" fill="#c82018" /></>,
  ff: <><circle cx="8" cy="8" r="6.800" fill="#2860b0" /><path d="M2 10q0 5 6 5 6.500 0 6.800-6.500Q14 3 9 1.500q3 3 1 5-3-1-4 1.500 2 3 5 1-2 3-5 2Q4 9.500 5 5 3 6 2 10z" fill="#e8781c" /></>,
  pages: <><path d="M3 2l8-1 3 12-8 2z" fill="#6aa8d8" stroke="#4a80a8" /><path d="M5 4l7-1 1 7-6 2z" fill="#8ac4ea" /></>,
  lc: <><rect x="1" y="1" width="14" height="14" fill="#ccd8f0" stroke="#5a3a98" strokeWidth="1.200" /><rect x="1" y="1" width="14" height="3" fill="#1c2f8a" /><text x="2.500" y="13" fontSize="8" fontWeight="700" fontFamily="Liberation Sans" fill="#1c2f8a">LC</text></>,
  dcirc: <><circle cx="8" cy="8" r="7" fill="#e8e4e0" stroke="#bbb" /><circle cx="8" cy="8" r="5" fill="#d83030" /><text x="5.300" y="11" fontSize="8" fontWeight="700" fontFamily="Liberation Sans" fill="#fff">D</text></>,
  media: <><circle cx="8" cy="8" r="7" fill="#3a8a9a" /><path d="M8 1a7 7 0 0 1 7 7" stroke="#e8a020" strokeWidth="2" fill="none" /><circle cx="8" cy="8" r="4" fill="#eef4fa" /><path d="M6.500 5.500l4 2.500-4 2.500z" fill="#1a3a9a" /></>,
  skype: <><circle cx="8" cy="8" r="7" fill="#1ea8e8" /><text x="4.500" y="12.500" fontSize="12" fontWeight="700" fontFamily="Liberation Sans" fill="#fff">S</text></>,
  xls: <><rect x="1" y="1" width="14" height="14" fill="#ecf4ec" stroke="#2e7a40" strokeWidth="1.200" /><path d="M4 4l8 8M12 4l-8 8" stroke="#2e8a40" strokeWidth="2.500" /></>,
  win: <><path d="M1 3q3-2 6 0l-1 5q-3-2-6 0z" fill="#e8481c" /><path d="M8 3q3 2 6 0l-1 5q-3 2-6 0z" fill="#5ab82c" /><path d="M0 9q3-2 6 0l-1 5q-3-2-6 0z" fill="#3070d8" /><path d="M7 9q3 2 6 0l-1 5q-3 2-6 0z" fill="#f4c018" /></>,
};
const QIcon = ({ n, s = 16 }) => <svg width={s} height={s} viewBox="0 0 16 16">{Q[n]}</svg>;

/* ---------- data ---------- */
const cols = 'ABCDEFGHIJKLMNOPQRSTUVWXY'.split('');
const widthOf = (i) => (i === 0 ? 85 : 64);
const fills = { 1: '#ff99cc', 2: '#ffff99', 3: '#ccffcc' };
const data = [
  ['Dec 2011', '20.2%', '37.7%', '34.6%', '4.2%', '2.5%'],
  ['Nov 2011', '21.2%', '38.1%', '33.4%', '4.2%', '2.4%'],
  ['Oct 2011', '21.7%', '38.7%', '32.3%', '4.2%', '2.4%'],
  ['Sep 2011', '22.9%', '39.7%', '30.5%', '4.0%', '2.2%'],
  ['Aug 2011', '22.4%', '40.6%', '30.3%', '3.8%', '2.3%'],
  ['Jul 2011', '22.0%', '42.0%', '29.4%', '3.6%', '2.4%'],
  ['Jun 2011', '23.2%', '42.2%', '27.9%', '3.7%', '2.4%'],
  ['May 2011', '24.9%', '42.4%', '25.9%', '4.0%', '2.4%'],
  ['Apr 2011', '24.3%', '42.9%', '25.6%', '4.1%', '2.6%'],
  ['Mar 2011', '25.8%', '42.2%', '25.0%', '4.0%', '2.5%'],
  ['Feb 2011', '26.5%', '42.4%', '24.1%', '4.1%', '2.5%'],
  ['Jan 2011', '26.6%', '42.8%', '23.8%', '4.0%', '2.5%'],
];
const notes = {
  2: ['1. Format column A using this date format: "Dec 2011", no day, only the abbreviated month and the year.', 11, 0.65],
  3: ['2. Underline cells A1 to F1 with a thick line', 5, 0.5],
  4: ["3. Format the numbers in column B so that the background color for theses cells is a light red or 'rose'", 10, 0.56],
  5: ['4. Format the numbers in column C so that the background color for theses cells is a light yellow', 10, 0.555],
  6: ['5. Format the numbers in column D so that the background color for theses cells is a pale green', 10, 0.55],
  7: ['6. Format columns B to F as percentages with one decimal place', 7, 0.55],
  8: ["7. Ensure that the headings in B1 wraps around and isn't covered by the cell to the right", 9, 0.62],
};
const firstRow = ['Date', null, 'Firefox', 'Chrome', 'Safari', 'Opera'];

const Cells = ({ from, to }) => {
  const out = [];
  for (let c = from; c < to; c++) out.push(<Cell key={c} $w={widthOf(c)} />);
  return out;
};

const SheetGrid = () => {
  const rows = [];
  rows.push(
    <Row key={1} $h={42}>
      <RowHead $on>1</RowHead>
      {firstRow.map((t, i) => i === 1 ? (
        <Cell key={i} $w={64} $thick="#000">
          <WrapText>Internet Explorer</WrapText>
          <Selection><FillHandle /></Selection>
        </Cell>
      ) : <Cell key={i} $w={widthOf(i)} $thick="#000"><Note $ls={0.4}>{t}</Note></Cell>)}
      <Cell $w={64} />
      <Cell $w={128} $center $thick="#333399"><Heading>Instructions</Heading></Cell>
      <Cells from={9} to={25} />
      <Cell />
    </Row>
  );
  for (let r = 2; r <= 42; r++) {
    const d = data[r - 2];
    const note = notes[r];
    const used = note ? 7 + note[1] : 7;
    rows.push(
      <Row key={r} $h={20}>
        <RowHead>{r < 42 ? r : ''}</RowHead>
        {d
          ? d.map((t, i) => (
              <Cell key={i} $w={widthOf(i)} $right $pr={i === 0 ? 6 : 2} $fill={fills[i]}><Note $ls={i === 0 ? 0 : 0.35}>{t}</Note></Cell>
            ))
          : <Cells from={0} to={6} />}
        <Cell $w={64} />
        {note
          ? <Cell $w={note[1] * 64}><Note $ls={note[2]}>{note[0]}</Note></Cell>
          : null}
        <Cells from={used} to={25} />
        <Cell />
      </Row>
    );
  }
  return rows;
};

export default function App() {
  return (
    <Page>
      <Global />
      <TitleBar>
        <QIcon n="xls" s={15} />
        <TitleText>Microsoft Excel - Browser data (complete).xls</TitleText>
        <WinButtons>
          <WinBtn><Glyph w={11} h={11} vb="0 0 11 11" d="M2 9h5" stroke="#000" sw={2} /></WinBtn>
          <WinBtn><Glyph w={11} h={11} vb="0 0 11 11" d="M3 3V1h6v6H7.500M1.500 3.500h6v6h-6zM1.500 4.500h6" stroke="#000" sw={1} /></WinBtn>
          <WinBtn $w={16}><Glyph w={11} h={11} vb="0 0 11 11" d="M2 2l7 7M9 2L2 9" stroke="#000" sw={1.600} /></WinBtn>
        </WinButtons>
      </TitleBar>

      <MenuBar>
        <MenuGrip />
        <MenuDoc><svg width="17" height="19" viewBox="0 0 17 19"><path d="M5 1h8l3 3v14H5z" fill="#eef2fa" stroke="#6a7a9a" /><path d="M7 8h7M7 11h7M7 14h7" stroke="#b0bcd0" /><rect x="0" y="3" width="11" height="11" fill="#e8f4e8" stroke="#1f7a3a" /><path d="M2.500 5.500l6 6M8.500 5.500l-6 6" stroke="#1f8a38" strokeWidth="2" /></svg></MenuDoc>
        <MenuItem $w={32}><Key>F</Key>ile</MenuItem>
        <MenuItem $w={34}><Key>E</Key>dit</MenuItem>
        <MenuItem $w={38}><Key>V</Key>iew</MenuItem>
        <MenuItem $w={45}><Key>I</Key>nsert</MenuItem>
        <MenuItem $w={50}>F<Key>o</Key>rmat</MenuItem>
        <MenuItem $w={41}><Key>T</Key>ools</MenuItem>
        <MenuItem $w={39}><Key>D</Key>ata</MenuItem>
        <MenuItem $w={53}><Key>W</Key>indow</MenuItem>
        <MenuItem $w={30}><Key>H</Key>elp</MenuItem>
        <HelpBox>
          Type a question for help
          <HelpArrow><Drop $w={8} /></HelpArrow>
        </HelpBox>
        <DocButtons>
          <DocBtn><Glyph w={11} h={11} vb="0 0 11 11" d="M2 9h5" stroke="#111" sw={2} /></DocBtn>
          <DocBtn><Glyph w={11} h={11} vb="0 0 11 11" d="M3.500 2.500V1h6v6H8M1.500 3.500h6v6h-6z" stroke="#111" sw={1.200} /></DocBtn>
          <DocBtn><Glyph w={11} h={11} vb="0 0 11 11" d="M2 2l7 7M9 2L2 9" stroke="#111" sw={1.600} /></DocBtn>
        </DocButtons>
      </MenuBar>

      <VmBar>
        <VmPinSlot>
          <svg width="16" height="16" viewBox="0 0 16 16"><rect x=".500" y=".500" width="15" height="15" rx="2" fill="#f6f5f3" stroke="#444" /><path d="M5 3h6v1l-1 1v3l2 2H4l2-2V5L5 4zM7.200 10h1.600v3L8 14l-.8-1z" fill="#111" /></svg>
        </VmPinSlot>
        <VmMenu><span>File</span><span>Virtual Machine</span><span>Help</span></VmMenu>
        <VmName>Sycamore</VmName>
        <VmIcons>
          <VmIconSlot $w={32}><svg width="16" height="16" viewBox="0 0 16 16"><rect x="1" y="1" width="14" height="10" rx="1" fill="#3a6fb0" stroke="#444" /><path d="M2 2h12v4L2 8z" fill="#6ea0d8" /><path d="M6 11h4v2H6zM4 14h8" stroke="#555" fill="#777" /></svg></VmIconSlot>
          <VmIconSlot $w={30}><svg width="17" height="17" viewBox="0 0 17 17"><rect x=".500" y=".500" width="16" height="16" rx="2.500" fill="#fbfaf8" stroke="#444" /><path d="M4 13h9" stroke="#222" strokeWidth="2" /></svg></VmIconSlot>
          <VmIconSlot $w={27}><svg width="17" height="17" viewBox="0 0 17 17"><rect x=".500" y=".500" width="16" height="16" rx="2.500" fill="#fbfaf8" stroke="#555" /><path d="M6.500 6V3.500h7v7H11M3.500 6.500h7v7h-7zM3.500 8h7M6.500 5h7" fill="none" stroke="#555" /></svg></VmIconSlot>
          <VmIconSlot $w={28}><svg width="17" height="17" viewBox="0 0 17 17"><rect x=".500" y=".500" width="16" height="16" rx="2.500" fill="#fbfaf8" stroke="#444" /><path d="M4 4l9 9M13 4l-9 9" stroke="#111" strokeWidth="2.200" /></svg></VmIconSlot>
        </VmIcons>
      </VmBar>

      <ToolRow $h={25}>
        <Band $w={510} $pb={2}>
          <Grip />
          <Ts list={['new', 'tmpl', 'open', 'save', 'save2']} />
          <Sep />
          <Ts list={['print', 'prev']} />
          <Sep />
          <T n="spell" />
          <Sep />
          <T n="undo" /><Drop $c="#8a8a84" />
          <T n="redo" /><Drop $w={13} $c="#8a8a84" />
          <Sep />
          <Ts list={['link', 'az', 'za', 'form']} />
          <Sep />
          <T n="scatter" /><Drop $w={11} />
          <T n="wand" on />
          <Combo $w={57} $ml={1}>100%<ComboBtn /></Combo>
          <TbHandle mb={2} />
        </Band>
        <Band $w={794} $ml={4} $pb={2}>
          <Grip $w={7} />
          <Combo $w={127}>Bodoni MT<ComboBtn /></Combo>
          <Combo $w={38} $ml={2}>11<ComboBtn /></Combo>
          <Sep />
          <Ts list={['alL', 'alC', 'alR', 'merge']} />
          <Sep />
          <T n="lock" on />
          <Ts list={['lock2', 'cy1', 'cy2', 'cy3', 'dollar', 'pct', 'aa', 'comma', 'inc', 'dec', 'fxb', 'zero', 'xcell', 'rc', 'bo']} />
          <Sep />
          <T n="borders" /><Drop />
          <T n="fold" />
          <T n="bucket" /><Drop />
          <T n="fontA" /><Drop $w={12} />
          <TbHandle more mb={2} />
        </Band>
        <Band $w={171} $ml={4} $pb={2}>
          <Grip />
          <T n="globe" />
          <TLabel $w={71}>Share This File</TLabel>
          <Sep $w={9} />
          <TLabel $w={35}>WebEx</TLabel>
          <Drop />
          <TbHandle mb={2} />
        </Band>
        <Band $w={89} $ml={2} $pb={2}>
          <Grip $w={7} />
          <Ts list={['sql1', 'sql2', 'up1']} />
          <TbHandle more mb={2} />
        </Band>
        <Band $w={99} $ml={3} $pb={2}>
          <Grip $w={7} />
          <Ts list={['dl', 'ul', 'run']} />
          <TbHandle more mb={2} />
        </Band>
      </ToolRow>

      <FormulaBar>
        <NameBox>B1</NameBox>
        <NameArrow />
        <FxBox>fx</FxBox>
        <FormulaInput>Internet Explorer</FormulaInput>
      </FormulaBar>

      <Sheet>
        <GridArea>
          <Row $h={21}>
            <RowHead $on={false} />
            {cols.map((c, i) => <ColHead key={c} $w={widthOf(i)} $on={c === 'B'}>{c}</ColHead>)}
            <ColHead />
          </Row>
          <SheetGrid />
          <ScoreButton>Score your work</ScoreButton>
        </GridArea>
        <VScroll>
          <Split />
          <SBtn><MiniTri dir="u" /></SBtn>
          <Thumb />
          <SBtn><MiniTri dir="d" /></SBtn>
        </VScroll>
      </Sheet>

      <TabRow>
        <NavBtn><Nav kind="first" /></NavBtn>
        <NavBtn><Nav kind="prev" /></NavBtn>
        <NavBtn><Nav kind="next" /></NavBtn>
        <NavBtn><Nav kind="last" /></NavBtn>
        <Tab>
          <TabShape width="62" height="16" viewBox="0 0 62 16"><path d="M.500 0l5 15.500h47L60.500 0" fill="#fff" stroke="#111" /></TabShape>
          <TabText>Sheet1</TabText>
        </Tab>
        <TabFill />
        <HSplit />
        <SBtn $w={13} $h={15}><MiniTri dir="l" /></SBtn>
        <HThumb />
        <Checker />
        <SBtn $w={14} $h={15}><MiniTri dir="r" /></SBtn>
        <Corner />
      </TabRow>

      <ToolRow $h={26} $top $bg="#f4f3f0">
        <Band $w={616}>
          <Grip $w={8} />
          <TLabel $w={27}>Dr<Key>a</Key>w</TLabel><Drop $w={12} />
          <T n="cursor" />
          <Sep $w={8} />
          <TLabel $w={59} $pl={2}>A<Key>u</Key>toShapes</TLabel><Drop $w={13} />
          <Ts list={['line', 'arrow', 'rect', 'ell', 'tbox', 'vbox', 'wordart', 'diag', 'clip', 'pic']} />
          <Sep $w={8} />
          <T n="bucket" /><Drop />
          <T n="pen" /><Drop $w={12} />
          <T n="fontA" /><Drop $w={9} />
          <Ts list={['lineS', 'dashS', 'arrS', 'shadow', 'cube']} />
          <TbHandle />
        </Band>
        <Band $w={608} $ml={4}>
          <Grip $w={8} />
          <Combo $w={132} $off><ComboBtn $off /></Combo>
          <T n="scatter" /><Drop />
          <Ts list={['chartHand', 'chartPen', 'grayCard']} />
          <TLabel $w={31} $pl={3}>Sizing</TLabel><Drop />
          <Sep $w={12} />
          <TLabel $w={37}>Shading</TLabel><Drop $w={12} />
          <Sep $w={8} />
          <Ts list={['curve', 'dropper', 'chartBlue', 'grayCard', 'grayList', 'grayGrid']} />
          <Sep />
          <Ts list={['gray3h', 'gray3v']} />
          <Sep />
          <Ts list={['link1', 'link2']} />
          <TbHandle />
        </Band>
        <Band $w={323} $ml={3}>
          <Grip $w={8} />
          <TLabel $w={52}><Key>P</Key>ivotTable</TLabel><Drop $w={11} />
          <Sep $w={8} />
          <Ts list={['pvt1', 'pvt2']} />
          <Sep />
          <Ts list={['minus', 'plus']} />
          <Sep />
          <T n="excl" />
          <Sep />
          <Ts list={['cfg', 'win']} />
          <Sep />
          <Ts list={['info', 'sheetG']} />
          <TbHandle />
        </Band>
      </ToolRow>

      <Status>
        <StatusText>Ready</StatusText>
        <Panel $w={33} />
        <Panel $w={112} />
        <Panel $w={26} />
        <Panel $w={30} />
        <Panel $w={23}>NUM</Panel>
        <Panel $w={30} />
        <Panel $w={25} />
        <Panel $w={20} />
      </Status>

      <Taskbar>
        <StartBtn><QIcon n="win" s={17} />Start</StartBtn>
        <TaskSep $ml={7} $mr={3} />
        {['ie', 'tb', 'fold', 'cal', 'xl', 'bub1', 'wd', 'bub2', 'ppt', 'bub3', 'tri', 'ff', 'pages', 'lc', 'dcirc', 'media', 'skype'].map((n) => (
          <Quick key={n}><QIcon n={n} s={17} /></Quick>
        ))}
        <TaskSep $ml={31} $mr={5} />
        <TaskBtn $w={160}><QIcon n="fold" />Downloads</TaskBtn>
        <TaskBtn $w={159} $ml={3} $on><QIcon n="xls" />Microsoft Excel - Bro...</TaskBtn>
        <TaskFill />
        <TaskSep $ml={0} $mr={6} />
        <Quick><svg width="16" height="16" viewBox="0 0 16 16"><path d="M12 1l2 2-7 8-3 1 1-3zM3 12q-2 2 0 3.500 2 .5 3-1" fill="none" stroke="#222" /></svg></Quick>
        <Tray>
          <TrayIcon $w={16}>«</TrayIcon>
          <TrayIcon $w={20}><svg width="17" height="17" viewBox="0 0 17 17"><path d="M4 2l4.500 3L13 2l3 3-3 3 3 3-3 2-4.500-3L4 13l-3-2 3-3-3-3z" fill="#2a80d8" /><circle cx="12" cy="12" r="4" fill="#2eb83a" /><path d="M10 12l1.500 1.500L14 10.500" stroke="#fff" fill="none" /></svg></TrayIcon>
          <TrayIcon $w={15}><svg width="15" height="15" viewBox="0 0 15 15"><rect x=".500" y="1.500" width="14" height="12" fill="#6a6a6a" stroke="#333" /><text x="1.500" y="10" fontSize="7.500" fontWeight="700" fontFamily="Liberation Sans" fill="#fff">vm</text></svg></TrayIcon>
          <TrayIcon $w={22}><svg width="16" height="16" viewBox="0 0 16 16"><path d="M2 2h12v7q0 4-6 6-6-2-6-6z" fill="#a81c2c" stroke="#eee" /><text x="3.500" y="11" fontSize="8.500" fontWeight="700" fontFamily="Liberation Sans" fill="#fff">M</text></svg></TrayIcon>
          <Clock>2:02 PM</Clock>
        </Tray>
      </Taskbar>
    </Page>
  );
}
